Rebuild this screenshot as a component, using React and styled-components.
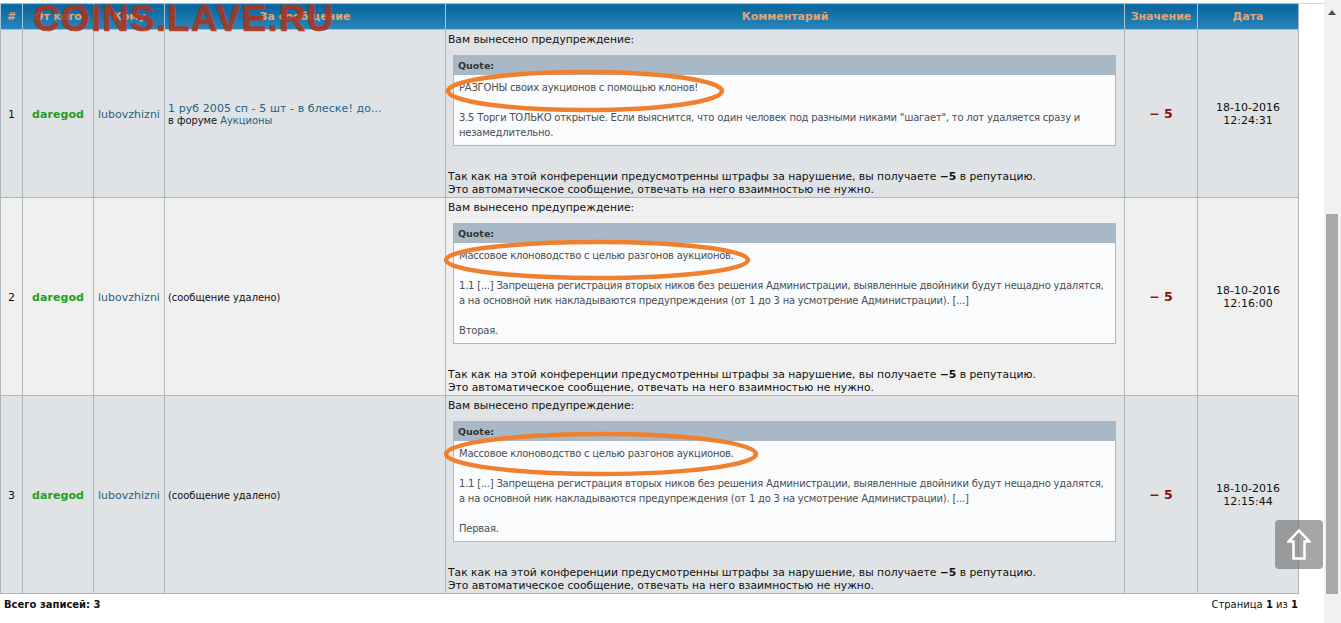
import React from 'react';
import styled, { createGlobalStyle } from 'styled-components';

const GlobalStyle = createGlobalStyle`
  html, body {
    margin: 0;
    padding: 0;
    background: #fff;
    overflow: hidden;
  }
`;

const Page = styled.div`
  display: flex;
  width: 1341px;
  height: 623px;
  overflow: hidden;
  font-family: "DejaVu Sans", Verdana, sans-serif;
  font-size: 11px;
  color: #111;
`;

const Main = styled.div`
  width: 1299px;
  padding-top: 3px;
  flex: none;
`;

const Gutter = styled.div`
  flex: 1;
  margin-top: 3px;
  border-top: 1px solid #d8d8d8;
`;

const Track = styled.div`
  width: 17px;
  flex: none;
  background: #f1f1f1;
  display: flex;
  flex-direction: column;
  align-items: stretch;
  padding: 0 3px 0 2px;
  box-sizing: border-box;
`;

const TrackArrow = styled.div`
  height: 214px;
  display: flex;
  justify-content: center;
  padding-top: 10px;
  box-sizing: border-box;
`;

const Thumb = styled.div`
  height: 380px;
  background: #a8a8a8;
`;

const Table = styled.table`
  width: 1299px;
  border-collapse: collapse;
  table-layout: fixed;
  border: 1px solid #a9b8c2;
`;

const Head = styled.th`
  height: 25px;
  padding: 0;
  font-size: 11px;
  font-weight: bold;
  color: #e3a672;
  text-align: center;
  background: linear-gradient(#07639b, #2a87bd);
  border-left: 1px solid #a9c4d4;
`;

const Row = styled.tr`
  height: ${p => p.$h}px;
  background: ${p => (p.$alt ? '#f0f0f0' : '#dfe3e6')};
`;

const Cell = styled.td`
  padding: 0;
  border: 1px solid #adb9bf;
  text-align: center;
  vertical-align: middle;
`;

const NameCell = styled(Cell)`
  padding-top: 2px;
`;

const Author = styled.span`
  color: #1fa01f;
  font-weight: bold;
  letter-spacing: 0.05px;
`;

const UserLink = styled.span`
  color: #2b5f7f;
`;

const TopicCell = styled(Cell)`
  padding: 2px 0 0 3px;
  text-align: left;
`;

const TopicLink = styled.div`
  color: #1c6288;
  font-size: 11px;
  line-height: 13px;
  letter-spacing: 0.08px;
`;

const Forum = styled.div`
  font-size: 9.9px;
  line-height: 12px;
`;

const ForumLink = styled.span`
  color: #1c6288;
`;

const CommentCell = styled(Cell)`
  padding: 3px 2px 1px 2px;
  text-align: left;
  vertical-align: top;
  line-height: 13px;
  font-size: 10.75px;
`;

const Quote = styled.div`
  position: relative;
  width: 661px;
  margin: 9px 0 24px 5px;
  border: 1px solid #a9b8c6;
  background: #fafbfc;
  color: #4a4f55;
  font-size: 10px;
  letter-spacing: -0.22px;
`;

const QuoteHead = styled.div`
  height: 20px;
  margin: -1px -1px 0;
  padding-left: 5px;
  background: #a9b8c6;
  color: #333;
  font-weight: bold;
  font-size: 9.5px;
  letter-spacing: 0;
  line-height: 21px;
`;

const QuoteBody = styled.div`
  padding: 5px 5px 5px;
  line-height: 15px;
`;

const Ellipse = styled.svg`
  position: absolute;
  left: ${p => p.$left}px;
  top: ${p => p.$top}px;
  pointer-events: none;
`;

const Points = styled.span`
  color: #8b1010;
  font-weight: bold;
  font-size: 12.5px;
`;

const Footer = styled.div`
  display: flex;
  justify-content: space-between;
  padding: 5px 1px 0 4px;
  font-size: 10px;
  line-height: 12px;
`;

const Watermark = styled.div`
  position: absolute;
  left: 33px;
  top: -1px;
  font-family: "Liberation Sans", Arial, sans-serif;
  font-size: 37px;
  font-weight: bold;
  letter-spacing: 1.1px;
  line-height: 40px;
  color: rgba(172, 52, 30, 0.9);
  -webkit-text-stroke: 0.6px rgba(172, 52, 30, 0.9);
  pointer-events: none;
`;

const ToTop = styled.div`
  position: absolute;
  left: 1275px;
  top: 520px;
  width: 48px;
  height: 49px;
  border-radius: 4px;
  background: rgba(110, 110, 110, 0.62);
  display: flex;
  align-items: center;
  justify-content: center;
`;

const Frame = styled.div`
  position: relative;
`;

const rows = [
  {
    n: 1, h: 168, date: '18-10-2016', time: '12:24:31',
    topic: true,
    first: 'РАЗГОНЫ своих аукционов с помощью клонов!',
    body: ['3.5 Торги ТОЛЬКО открытые. Если выяснится, что один человек под разными никами "шагает", то лот удаляется сразу и незамедлительно.'],
    ellipse: { left: -9, top: 13, w: 280, h: 44 },
  },
  {
    n: 2, h: 198, date: '18-10-2016', time: '12:16:00',
    first: 'Массовое клоноводство с целью разгонов аукционов.',
    body: ['1.1 [...] Запрещена регистрация вторых ников без решения Администрации, выявленные двойники будут нещадно удалятся, а на основной ник накладываются предупреждения (от 1 до 3 на усмотрение Администрации). [...]', 'Вторая.'],
    ellipse: { left: -11, top: 15, w: 308, h: 42 },
  },
  {
    n: 3, h: 198, date: '18-10-2016', time: '12:15:44',
    first: 'Массовое клоноводство с целью разгонов аукционов.',
    body: ['1.1 [...] Запрещена регистрация вторых ников без решения Администрации, выявленные двойники будут нещадно удалятся, а на основной ник накладываются предупреждения (от 1 до 3 на усмотрение Администрации). [...]', 'Первая.'],
    ellipse: { left: -11, top: 9, w: 316, h: 46 },
  },
];

const QuoteEllipse = ({ left, top, w, h }) => (
  <Ellipse $left={left} $top={top} width={w} height={h} viewBox={`0 0 ${w} ${h}`}>
    <ellipse cx={w / 2} cy={h / 2} rx={w / 2 - 3} ry={h / 2 - 3} fill="none" stroke="#f0802e" strokeWidth="4.5" />
  </Ellipse>
);

const App = () => {
  return (
    <Page>
      <GlobalStyle />
      <Frame>
        <Main>
          <Table>
            <colgroup>
              <col width="22" />
              <col width="71" />
              <col width="71" />
              <col width="281" />
              <col width="679" />
              <col width="73" />
              <col width="101" />
            </colgroup>
            <thead>
              <tr>
                <Head>#</Head>
                <Head>От кого</Head>
                <Head>Кому</Head>
                <Head>За сообщение</Head>
                <Head>Комментарий</Head>
                <Head>Значение</Head>
                <Head>Дата</Head>
              </tr>
            </thead>
            <tbody>
              {rows.map(r => (
                <Row key={r.n} $h={r.h} $alt={r.n === 2}>
                  <NameCell>{r.n}</NameCell>
                  <NameCell><Author>daregod</Author></NameCell>
                  <NameCell><UserLink>lubovzhizni</UserLink></NameCell>
                  {r.topic ? (
                    <TopicCell>
                      <TopicLink>1 руб 2005 сп - 5 шт - в блеске! до...</TopicLink>
                      <Forum>в форуме <ForumLink>Аукционы</ForumLink></Forum>
                    </TopicCell>
                  ) : (
                    <TopicCell><Forum>(сообщение удалено)</Forum></TopicCell>
                  )}
                  <CommentCell>
                    Вам вынесено предупреждение:
                    <Quote>
                      <QuoteHead>Quote:</QuoteHead>
                      <QuoteBody>
                        {r.first}
                        <br /><br />
                        {r.body[0]}
                        {r.body[1] && <><br /><br />{r.body[1]}</>}
                      </QuoteBody>
                      <QuoteEllipse {...r.ellipse} />
                    </Quote>
                    Так как на этой конференции предусмотренны штрафы за нарушение, вы получаете <b>−5</b> в репутацию.
                    <br />
                    Это автоматическое сообщение, отвечать на него взаимностью не нужно.
                  </CommentCell>
                  <Cell><Points>− 5</Points></Cell>
                  <Cell>{r.date}<br />{r.time}</Cell>
                </Row>
              ))}
            </tbody>
          </Table>
          <Footer>
            <b>Всего записей: 3</b>
            <span>Страница <b>1</b> из <b>1</b></span>
          </Footer>
        </Main>
        <Watermark>COINS.LAVE.RU</Watermark>
      </Frame>
      <Gutter />
      <Track>
        <TrackArrow>
          <svg width="8" height="5" viewBox="0 0 8 5"><path d="M4 0 L8 5 L0 5 Z" fill="#505050" /></svg>
        </TrackArrow>
        <Thumb />
      </Track>
      <ToTop>
        <svg width="24" height="31" viewBox="0 0 24 31">
          <path d="M12 1.5 L22.5 12.5 L17.5 12.5 L17.5 29.5 L6.5 29.5 L6.5 12.5 L1.5 12.5 Z" fill="none" stroke="#fff" strokeWidth="2.5" />
        </svg>
      </ToTop>
    </Page>
  );
};

export default App;
